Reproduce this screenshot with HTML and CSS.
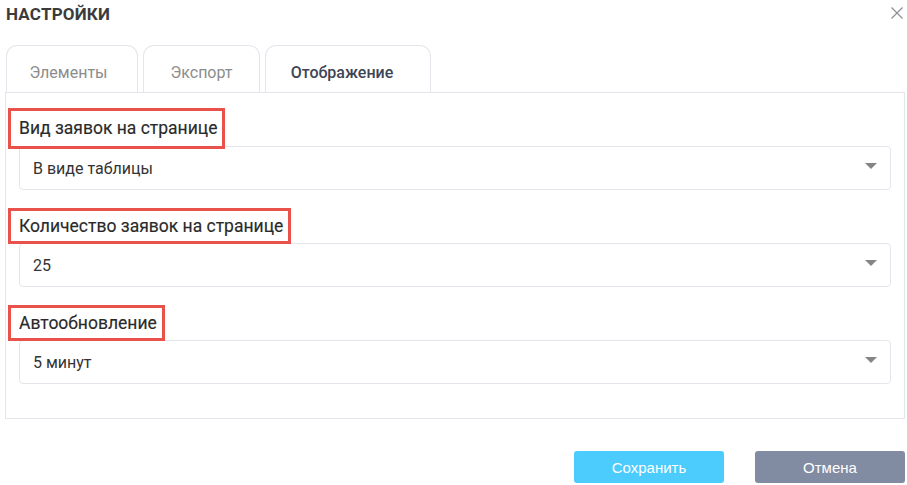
FILE: index.html
```html
<!DOCTYPE html>
<html lang="ru">
<head>
<meta charset="utf-8">
<title>Настройки</title>
<link rel="stylesheet" href="styles.css">
</head>
<body>
<div class="dialog">
  <div class="header">
    <div class="title">НАСТРОЙКИ</div>
    <button class="close" aria-label="Закрыть">
      <svg width="12" height="12" viewBox="0 0 12 12"><path d="M0.5 0.5L11.5 11.5M11.5 0.5L0.5 11.5" stroke="#8a8d94" stroke-width="1.2" fill="none"/></svg>
    </button>
  </div>
  <div class="tabs">
    <div class="tab tab-elements">Элементы</div>
    <div class="tab tab-export">Экспорт</div>
    <div class="tab tab-view active">Отображение</div>
  </div>
  <div class="panel">
    <div class="field">
      <div class="label label-tall">Вид заявок на странице</div>
      <div class="select"><span>В виде таблицы</span><i class="arrow"></i></div>
    </div>
    <div class="field">
      <div class="label">Количество заявок на странице</div>
      <div class="select"><span>25</span><i class="arrow"></i></div>
    </div>
    <div class="field field-last">
      <div class="label">Автообновление</div>
      <div class="select"><span>5 минут</span><i class="arrow"></i></div>
    </div>
  </div>
  <div class="actions">
    <button class="btn btn-save">Сохранить</button>
    <button class="btn btn-cancel">Отмена</button>
  </div>
</div>
</body>
</html>
```
FILE: styles.css
```css
* { box-sizing: border-box; }
html, body { margin: 0; padding: 0; background: #fff; }
body { font-family: Roboto, "Liberation Sans", sans-serif; color: #333; width: 907px; height: 485px; overflow: hidden; }

.dialog { padding: 0 2px 0 5px; }

.header { display: flex; justify-content: space-between; align-items: flex-start; height: 45px; padding: 4px 0 0 1px; }
.title { font-size: 17px; font-weight: 700; color: #3b3b3b; line-height: 20px; letter-spacing: 0.2px; }
.close { border: 0; background: none; padding: 0; margin: 3px 2px 0 0; width: 12px; height: 12px; display: flex; cursor: pointer; }

.tabs { display: flex; gap: 5px; padding-left: 1px; height: 47px; }
.tab { height: 47px; border: 1px solid #e4e6ec; border-bottom: 0; border-radius: 11px 11px 0 0; font-size: 16px; color: #8c8c8c; display: flex; align-items: center; justify-content: center; padding-top: 6px; }
.tab-elements { width: 132px; padding-right: 7px; }
.tab-export { width: 117px; }
.tab-view { width: 166px; }
.tab.active { color: #3d4556; font-weight: 500; padding-right: 12px; }

.panel { border: 1px solid #e4e6ec; height: 327px; padding: 15px 13px 0 2px; }
.field { display: flex; flex-direction: column; align-items: flex-start; margin-bottom: 18px; }
.field-last { margin-top: 1px; }
.label { border: 3px solid #e8524a; padding: 4px 5px 3px 8px; font-size: 17.5px; line-height: 23px; font-weight: 400; color: #2a2a2a; margin-bottom: -1px; position: relative; z-index: 1; -webkit-text-stroke: 0.15px #2a2a2a; }
.label-tall { padding-top: 6px; padding-bottom: 6px; margin-bottom: -3px; }
.select { align-self: stretch; margin-left: 11px; height: 44px; border: 1px solid #e4e6ec; border-radius: 4px; display: flex; align-items: center; justify-content: space-between; padding: 0 13px 0 13px; font-size: 16px; color: #333; }
.arrow { width: 0; height: 0; border-left: 6px solid transparent; border-right: 6px solid transparent; border-top: 6px solid #858585; margin-top: -5px; }

.actions { display: flex; justify-content: flex-end; gap: 31px; margin-top: 32px; }
.btn { width: 150px; height: 32px; border: 0; border-radius: 3px; color: #fff; font-family: "Liberation Sans", Arial, sans-serif; font-size: 15px; cursor: pointer; }
.btn-save { background: #4ccbfd; }
.btn-cancel { background: #818ba1; }
```
